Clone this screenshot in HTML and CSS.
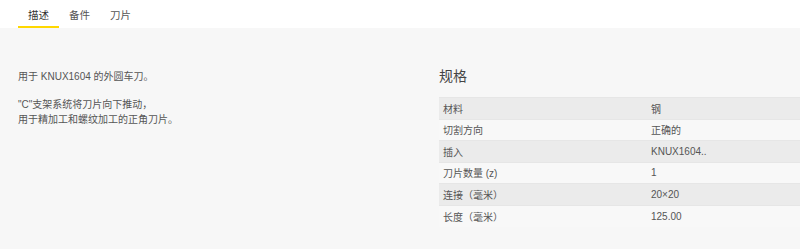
FILE: index.html
```html
<!DOCTYPE html>
<html lang="zh-CN">
<head>
  <meta charset="UTF-8">
  <meta name="viewport" content="width=device-width, initial-scale=1">
  <title>产品详情</title>
  <link rel="stylesheet" href="styles.css">
</head>
<body>
  <div class="tabs">
    <a class="tab active" href="#">描述</a>
    <a class="tab" href="#">备件</a>
    <a class="tab" href="#">刀片</a>
  </div>
  <div class="panel">
    <div class="description">
      <p>用于 KNUX1604 的外圆车刀。</p>
      <p>"C"支架系统将刀片向下推动，<br>用于精加工和螺纹加工的正角刀片。</p>
    </div>
    <div class="specs">
      <h2>规格</h2>
      <table class="spec-table">
        <tr><td>材料</td><td>钢</td></tr>
        <tr><td>切割方向</td><td>正确的</td></tr>
        <tr><td>插入</td><td>KNUX1604..</td></tr>
        <tr><td>刀片数量 (z)</td><td>1</td></tr>
        <tr><td>连接（毫米）</td><td>20×20</td></tr>
        <tr><td>长度（毫米）</td><td>125.00</td></tr>
      </table>
    </div>
  </div>
</body>
</html>
```

FILE: styles.css
```css
* {
  margin: 0;
  padding: 0;
  box-sizing: border-box;
}

body {
  font-family: 'Liberation Sans', Arial, 'Noto Sans CJK SC', sans-serif;
  color: #555;
  background: #f7f7f7;
  font-size: 10px;
  overflow: hidden;
}

.tabs {
  display: flex;
  height: 28px;
  padding-left: 18px;
  background: #fff;
}

.tab {
  display: block;
  padding: 8px 10px 0;
  font-size: 10.5px;
  line-height: 14px;
  color: #555;
  text-decoration: none;
  border-bottom: 2px solid transparent;
  height: 28px;
}

.tab.active {
  color: #333;
  border-bottom-color: #ffd800;
}

.panel {
  display: flex;
  padding: 40px 0 0 18px;
}

.description {
  width: 421px;
  padding-top: 1px;
}

.description p {
  line-height: 15px;
  margin-bottom: 13px;
}

.specs {
  flex: 1;
}

.specs h2 {
  font-size: 14px;
  font-weight: normal;
  color: #444;
  line-height: 18px;
  margin-top: -1px;
  margin-bottom: 12px;
}

.spec-table {
  width: 100%;
  border-collapse: collapse;
  table-layout: fixed;
}

.spec-table td {
  height: 21.5px;
  padding: 0 4px;
  border-top: 1px solid #e6e6e6;
  vertical-align: middle;
}

.spec-table td:first-child {
  width: 208px;
}

.spec-table tr:nth-child(odd) td {
  background: #ebebeb;
}

.spec-table tr:nth-child(even) td {
  background: #f8f8f8;
}
```
